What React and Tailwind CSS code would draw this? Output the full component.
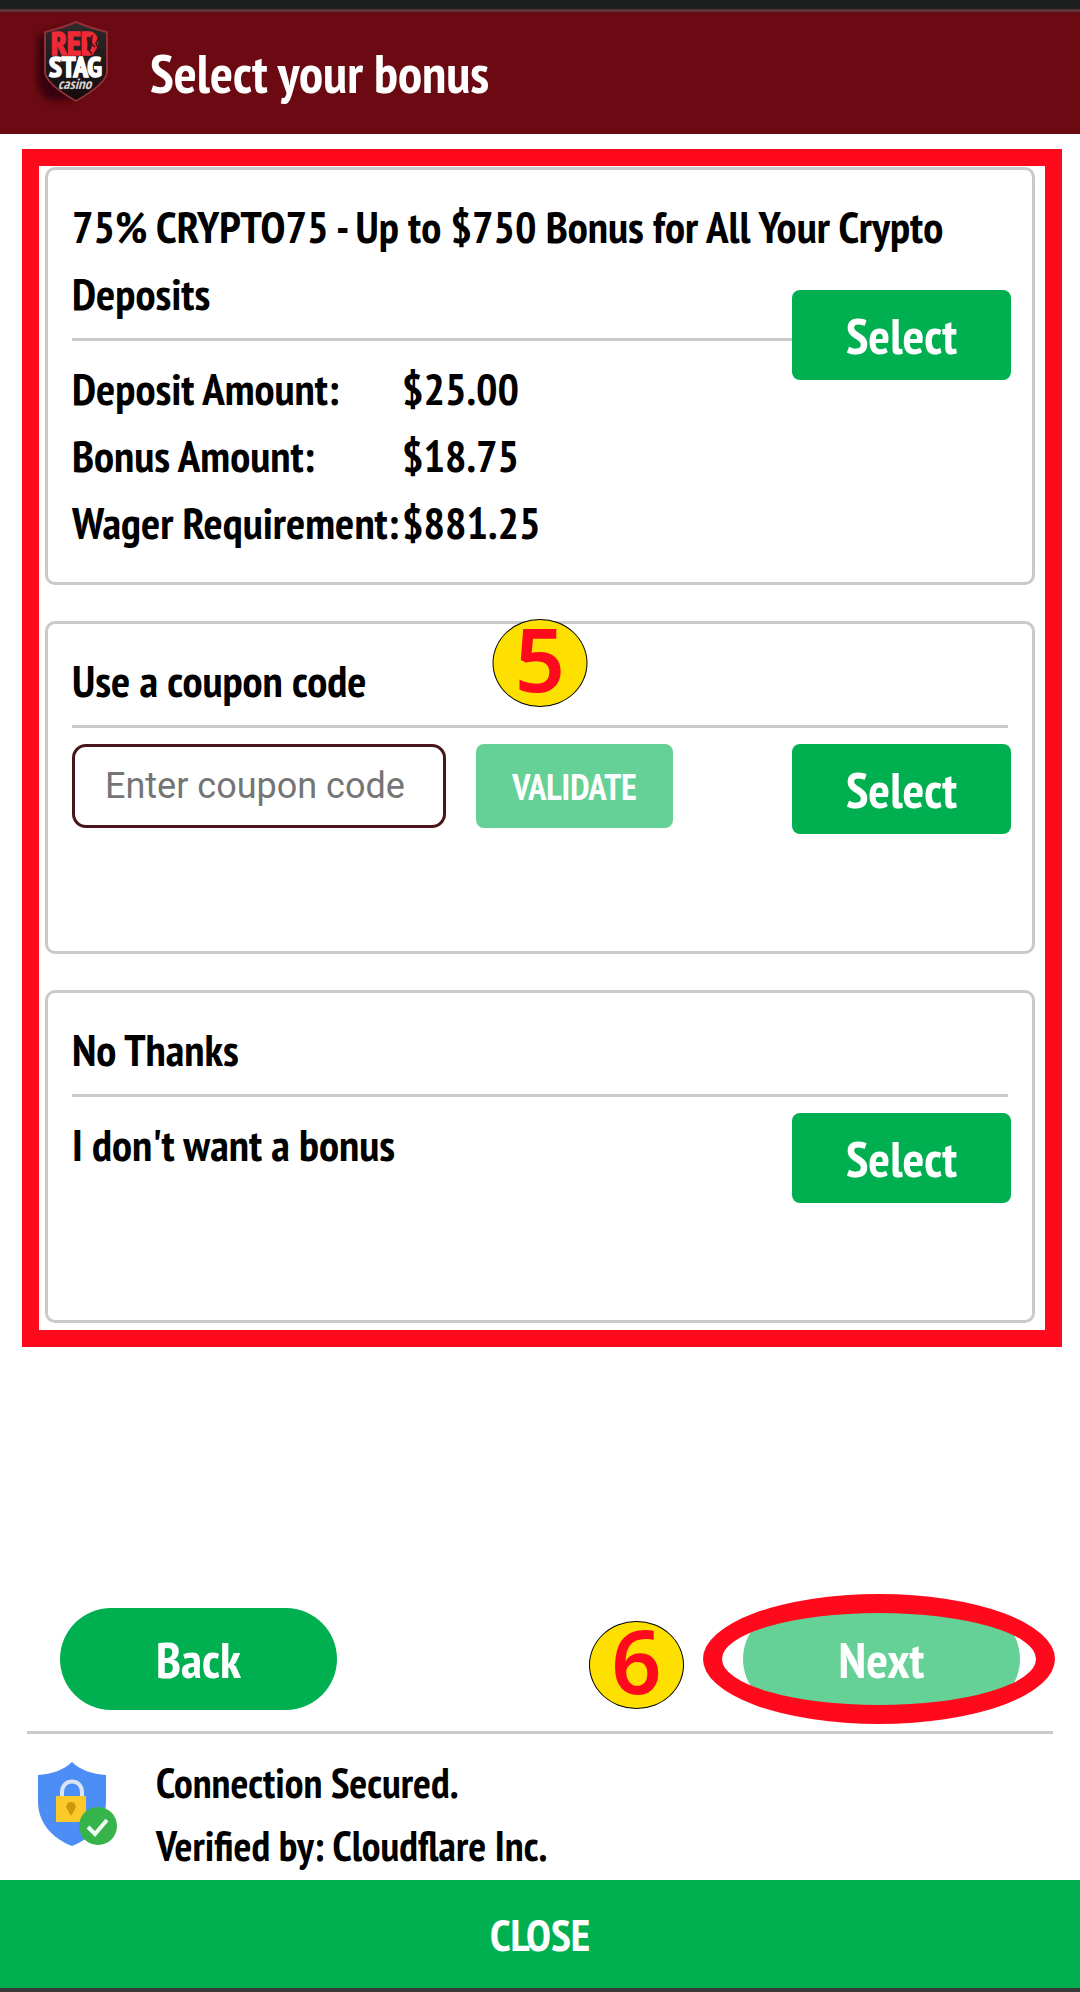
import { useState } from 'react';

const OFFER_ROWS = [
  { label: 'Deposit Amount:', value: '$25.00' },
  { label: 'Bonus Amount:', value: '$18.75' },
  { label: 'Wager Requirement:', value: '$881.25' },
];

function Logo() {
  return (
    <svg className="w-[84px] h-[92px] shrink-0" viewBox="0 0 84 92" role="img" aria-label="Red Stag Casino">
      <defs>
        <filter id="logo-shadow" x="-30%" y="-20%" width="160%" height="150%">
          <feGaussianBlur stdDeviation="3" />
        </filter>
        <linearGradient id="logo-fill" x1="0" y1="0" x2="0" y2="1">
          <stop offset="0" stopColor="#2f2a2c" />
          <stop offset="1" stopColor="#120a0b" />
        </linearGradient>
      </defs>
      <path d="M4 20 L36 10 L62 20 L62 66 L40 84 L14 84 Q3 76 3 60 Z" fill="#2c0507" opacity="0.8" filter="url(#logo-shadow)" />
      <path
        d="M42 6 Q56 12 73 16 V56 Q72 68 42 85 Q12 68 11 56 V16 Q28 12 42 6 Z"
        fill="url(#logo-fill)"
        stroke="#8f2f38"
        strokeWidth="2"
      />
      <text x="17" y="39" fontSize="32" fontWeight="700" fontFamily="'PT Sans Narrow', sans-serif" fill="#ee2a36" stroke="#ee2a36" strokeWidth="1.5">
        RED
      </text>
      {/* stag head inside the D */}
      <path d="M53 22 l3 6 l-2 5 l4 5 M58 19 l-1 8 l4 4 M66 20 l-4 7 l2 5 l-4 6" fill="none" stroke="#3a1115" strokeWidth="1.5" />
      <text x="15" y="61" fontSize="29" fontWeight="700" fontFamily="'PT Sans Narrow', sans-serif" fill="#fff" stroke="#fff" strokeWidth="1.5">
        STAG
      </text>
      <text x="24" y="73" fontSize="15" fontWeight="700" fontStyle="italic" fontFamily="'PT Sans Narrow', sans-serif" fill="#d8d0d0">
        casino
      </text>
    </svg>
  );
}

function SecureIcon() {
  return (
    <svg className="w-[82px] h-[86px] shrink-0" viewBox="0 0 82 86" aria-hidden="true">
      <path d="M34 1 C42 9 54 13 68 14 V40 C68 62 54 77 34 85 C14 77 0 62 0 40 V14 C14 13 26 9 34 1 Z" fill="#4c8df6" />
      <path d="M24 37 V31 C24 17 44 17 44 31 V37" fill="none" stroke="#dbe4f3" strokeWidth="4" />
      <rect x="18" y="35" width="30" height="26" rx="1" fill="#fcc92b" />
      <path d="M33 41 a4.500 4.500 0 0 1 4 7 L33 55 L29 48 a4.500 4.500 0 0 1 4 -7 Z" fill="#c99a0c" />
      <circle cx="60" cy="65" r="19" fill="#36b34a" />
      <path d="M50 66 L57 73 L69 59" fill="none" stroke="#f2fbf3" strokeWidth="4" />
    </svg>
  );
}

function StepBadge({ step, className }) {
  return (
    <span
      className={`absolute flex items-center justify-center w-[95px] h-[88px] pb-[10px] rounded-[50%] border border-black bg-[#fde000] text-[#ff0a1c] font-semibold font-['Noto_Sans',sans-serif] text-[88px] leading-none ${className}`}
    >
      {step}
    </span>
  );
}

function BonusCard({ title, badge, onSelect, children }) {
  return (
    <section className="relative grid grid-cols-1 min-h-[333px] border-3 border-[#cacaca] rounded-[10px]">
      <div className="col-start-1 row-start-1 px-6 pt-[23px] pb-[26px]">
        <h2>{title}</h2>
        <hr className="mt-[11px] border-t-3 border-[#cacaca]" />
        {children}
      </div>
      <button
        type="button"
        onClick={onSelect}
        className="col-start-1 row-start-1 justify-self-end self-start mt-[120px] mr-[21px] w-[219px] h-[90px] rounded-lg bg-[#00b050] text-white text-[51px]"
      >
        Select
      </button>
      {badge}
    </section>
  );
}

export default function App() {
  const [coupon, setCoupon] = useState('');
  const [selected, setSelected] = useState(null);

  return (
    <div className="min-h-screen flex flex-col bg-white text-black font-bold font-['PT_Sans_Narrow','Open_Sans_Condensed',sans-serif] text-[45px] leading-[67px]">
      {/* Header */}
      <header className="border-t-[9px] border-[#1e201f] bg-[#6b0a12] text-white">
        <div className="flex items-start gap-8 pt-1 pb-[26px] pl-[34px] border-t-3 border-[#5a3537]">
          <Logo />
          <h1 className="pt-6 text-[54px]">Select your bonus</h1>
        </div>
      </header>

      <main className="mt-[15px] ml-[22px] mr-[18px] border-[17px] border-[#ff0a1c] pt-px pr-[10px] pb-[7px] pl-[6px] flex flex-col gap-9">
        <BonusCard
          title="75% CRYPTO75 - Up to $750 Bonus for All Your Crypto Deposits"
          onSelect={() => setSelected('crypto75')}
        >
          <dl className="mt-[14px]">
            {OFFER_ROWS.map(row => (
              <div key={row.label} className="flex">
                <dt className="w-[330px] whitespace-nowrap">{row.label}</dt>
                <dd>{row.value}</dd>
              </div>
            ))}
          </dl>
        </BonusCard>

        <BonusCard
          title={<label htmlFor="coupon">Use a coupon code</label>}
          onSelect={() => setSelected('coupon')}
          badge={<StepBadge step="5" className="-top-[5px] left-1/2 -translate-x-1/2" />}
        >
          <div className="flex gap-[30px] mt-4">
            <input
              id="coupon"
              type="text"
              value={coupon}
              onChange={e => setCoupon(e.target.value)}
              placeholder="Enter coupon code"
              className="w-[374px] h-[84px] px-[30px] border-3 border-[#4a1519] rounded-[14px] font-normal font-['Roboto',sans-serif] text-[36px] placeholder:text-[#757575]"
            />
            <button type="button" className="w-[197px] h-[84px] rounded-lg bg-[#66d196] text-white text-[36px]">
              VALIDATE
            </button>
          </div>
        </BonusCard>

        <BonusCard title="No Thanks" onSelect={() => setSelected('none')}>
          <p className="mt-[14px]">I don't want a bonus</p>
        </BonusCard>
      </main>

      {/* Navigation */}
      <nav className="mt-auto flex justify-between px-[60px] text-white text-[51px]">
        <button type="button" className="w-[277px] h-[102px] rounded-full bg-[#00b050]">
          Back
        </button>
        <div className="relative">
          <button
            type="button"
            aria-disabled={!selected}
            className="w-[277px] h-[102px] rounded-full bg-[#66d196]"
          >
            Next
          </button>
          <span className="absolute -top-[14px] -left-10 w-[352px] h-[130px] rounded-[50%] border-[19px] border-[#ff0a1c] pointer-events-none" />
          <StepBadge step="6" className="top-[13px] -left-[154px]" />
        </div>
      </nav>

      {/* Footer */}
      <footer className="mt-[21px] text-[42px] leading-[63px]">
        <hr className="mx-[27px] border-t-3 border-[#cacaca]" />
        <div className="flex items-start gap-9 pt-[17px] pb-[3px] pl-[38px]">
          <div className="pt-[10px]">
            <SecureIcon />
          </div>
          <p>
            Connection Secured.
            <br />
            Verified by: Cloudflare Inc.
          </p>
        </div>
        <button type="button" className="block w-full h-[112px] border-b-4 border-[#3a3a3a] bg-[#00b050] text-white text-[45px]">
          CLOSE
        </button>
      </footer>
    </div>
  );
}
